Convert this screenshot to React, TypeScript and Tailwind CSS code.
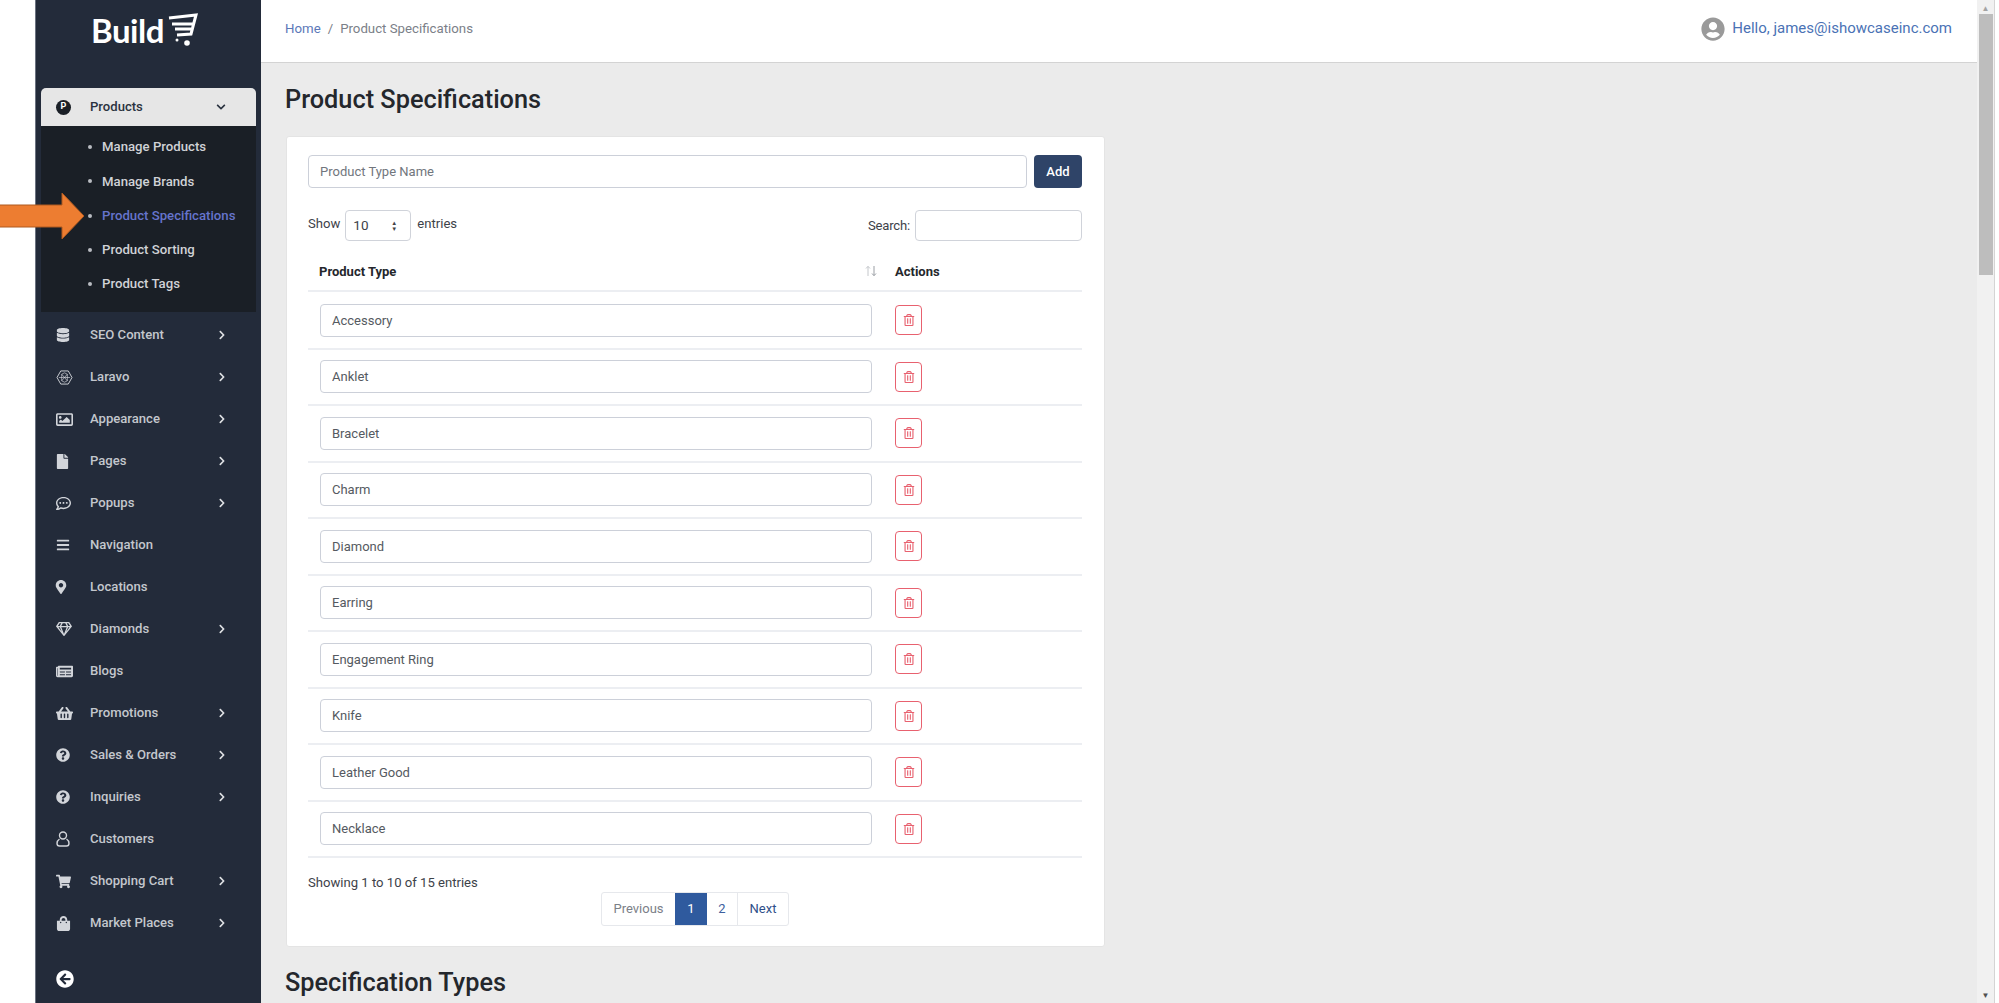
import {
  FaArrowCircleLeft,
  FaBars,
  FaChevronDown,
  FaChevronRight,
  FaDatabase,
  FaFile,
  FaMapMarkerAlt,
  FaNewspaper,
  FaQuestionCircle,
  FaRegCommentDots,
  FaRegGem,
  FaRegImage,
  FaRegTrashAlt,
  FaShoppingBag,
  FaShoppingBasket,
  FaShoppingCart,
  FaUserCircle,
} from "react-icons/fa";
import type { ReactNode } from "react";

const LaravoIcon = () => (
  <svg viewBox="0 0 18 16" className="h-[15px] w-[17px]" fill="none" stroke="currentColor" strokeWidth="1">
    <path d="M5 1h8l4 7-4 7H5L1 8z" />
    <path d="M6 4.5l3-1.5 3 1.5v7l-3 1.5-3-1.5zM3 8h12M6 4.5l6 7M12 4.5l-6 7" strokeWidth="0.7" />
  </svg>
);

const CustomerIcon = () => (
  <svg viewBox="0 0 14 16" className="h-[16px] w-[14px]" fill="none" stroke="currentColor" strokeWidth="1.4">
    <circle cx="7" cy="4.5" r="3.5" />
    <path d="M3.5 8C2 9 1 10.5 1 12.2 1 14 2 15 3.5 15h7c1.500 0 2.500-1 2.500-2.800C13 10.500 12 9 10.500 8" />
  </svg>
);

const SortIcon = () => (
  <svg viewBox="0 0 12 12" className="h-[12px] w-[12px]" fill="none" strokeWidth="1">
    <path d="M3 11V1.500M1 3.500l2-2.200 2 2.200" stroke="#c4c7cb" />
    <path d="M9 1v9.500M7 8.500l2 2.200 2-2.200" stroke="#9a9ea4" />
  </svg>
);

const menu: { label: string; icon: ReactNode; more?: boolean }[] = [
  { label: "SEO Content", icon: <FaDatabase size={14} />, more: true },
  { label: "Laravo", icon: <LaravoIcon />, more: true },
  { label: "Appearance", icon: <FaRegImage size={17} />, more: true },
  { label: "Pages", icon: <FaFile size={15} className="-ml-[1px]" />, more: true },
  { label: "Popups", icon: <FaRegCommentDots size={15} />, more: true },
  { label: "Navigation", icon: <FaBars size={14} /> },
  { label: "Locations", icon: <FaMapMarkerAlt size={14} className="-ml-[2px]" /> },
  { label: "Diamonds", icon: <FaRegGem size={16} />, more: true },
  { label: "Blogs", icon: <FaNewspaper size={17} /> },
  { label: "Promotions", icon: <FaShoppingBasket size={17} />, more: true },
  { label: "Sales & Orders", icon: <FaQuestionCircle size={14} />, more: true },
  { label: "Inquiries", icon: <FaQuestionCircle size={14} />, more: true },
  { label: "Customers", icon: <CustomerIcon /> },
  { label: "Shopping Cart", icon: <FaShoppingCart size={15} />, more: true },
  { label: "Market Places", icon: <FaShoppingBag size={15} />, more: true },
];

const subMenu = ["Manage Products", "Manage Brands", "Product Specifications", "Product Sorting", "Product Tags"];

const productTypes = [
  "Accessory",
  "Anklet",
  "Bracelet",
  "Charm",
  "Diamond",
  "Earring",
  "Engagement Ring",
  "Knife",
  "Leather Good",
  "Necklace",
];

function Sidebar() {
  return (
    <aside className="flex w-[226px] shrink-0 flex-col border-l border-[#6b7280] bg-[#232b3a]">
      <div className="flex h-[88px] items-start pl-[55px] pt-[8px] text-white">
        <span className="font-['Lato',sans-serif] text-[33px] leading-[44px] font-bold tracking-[-0.5px]">Build</span>
        <svg viewBox="0 0 30 34" className="mt-[5px] ml-[4px] h-[34px] w-[30px]" fill="none" stroke="currentColor" strokeWidth="3">
          <path d="M1 5l27-3-5 19-14 1M4 11h21M7 16h16" />
          <circle cx="9" cy="27" r="1.500" fill="currentColor" stroke="none" />
          <circle cx="19" cy="30" r="2.800" fill="currentColor" stroke="none" />
        </svg>
      </div>

      <div className="mx-[5px] overflow-hidden rounded-t-[5px]">
        <div className="flex h-[38px] items-center bg-[#e6e6e6] pl-[15px] pr-[30px] text-[#2b3340]">
          <span className="flex h-[15px] w-[15px] items-center justify-center rounded-full bg-[#1a1f26] text-[9px] font-bold text-white">P</span>
          <span className="ml-[19px] flex-1 text-[13.100px] font-medium">Products</span>
          <FaChevronDown size={10} />
        </div>
        <ul className="flex h-[186px] flex-col bg-[#1a1f26] pt-[4px]">
          {subMenu.map((item) => (
            <li key={item} className="flex h-[34.300px] items-center pl-[47px]">
              <span className="h-[4px] w-[4px] rounded-full bg-[#b9bcc2]" />
              <span
                className={
                  item === "Product Specifications"
                    ? "ml-[10px] text-[13.200px] font-medium text-[#6674cc]"
                    : "ml-[10px] text-[13.200px] font-medium text-[#d0d2d6]"
                }
              >
                {item}
              </span>
            </li>
          ))}
        </ul>
      </div>

      <ul className="mt-[2px]">
        {menu.map((item) => (
          <li key={item.label} className="flex h-[42px] items-center pl-[20px] pr-[34px] text-[#c3c7cd]">
            <span className="flex w-[18px] items-center justify-start text-[#d2d5da]">{item.icon}</span>
            <span className="ml-[16px] flex-1 text-[13.100px] font-medium">{item.label}</span>
            {item.more && <FaChevronRight size={10} className="text-[#dfe1e4]" />}
          </li>
        ))}
      </ul>

      <div className="mt-[26px] pl-[20px] text-white">
        <FaArrowCircleLeft size={18} />
      </div>
    </aside>
  );
}

function TopBar() {
  return (
    <header className="flex h-[63px] shrink-0 items-center justify-between border-b border-[#d3d3d3] bg-white pb-[5px] pl-[24px] pr-[25px]">
      <div className="flex items-center text-[13.250px] text-[#7b8088]">
        <span className="text-[#5b78b8]">Home</span>
        <span className="mx-[7px]">/</span>
        <span>Product Specifications</span>
      </div>
      <div className="flex items-center text-[15px] text-[#4a72b5]">
        <FaUserCircle size={24} className="text-[#9a9a9a]" />
        <span className="ml-[7px]">Hello, james@ishowcaseinc.com</span>
      </div>
    </header>
  );
}

function ProductCard() {
  return (
    <section className="ml-[1px] w-[819px] rounded-[3px] border border-[#e4e4e4] bg-white pl-[21px] pr-[22px] pt-[18px] text-[13.100px] text-[#3d4249]">
      <div className="flex gap-[7px]">
        <input
          placeholder="Product Type Name"
          className="h-[33px] flex-1 rounded-[4px] border border-[#ccd0d9] px-[11px] text-[13px] outline-none placeholder:text-[#71767d]"
        />
        <button className="h-[33px] w-[48px] rounded-[4px] bg-[#2f4468] text-[13px] font-medium text-white">Add</button>
      </div>

      <div className="mt-[22px] flex h-[31px] items-center justify-between">
        <div className="flex items-center">
          <span className="-mt-[3px]">Show</span>
          <span className="ml-[5px] flex h-[31px] w-[66px] items-center justify-between rounded-[4px] border border-[#d0d3da] pl-[7px] pr-[13px] text-[13.500px]">
            10
            <span className="flex flex-col text-[6px] leading-[6px] text-[#444]">
              <span>▲</span>
              <span>▼</span>
            </span>
          </span>
          <span className="-mt-[3px] ml-[6px]">entries</span>
        </div>
        <div className="flex items-center">
          <span className="tracking-[-0.2px]">Search:</span>
          <input className="ml-[5px] h-[31px] w-[167px] rounded-[4px] border border-[#d0d3da] outline-none" />
        </div>
      </div>

      <div className="flex h-[51px] items-end border-b-2 border-[#eceef2] pb-[9px] font-bold text-[#24272c]">
        <div className="flex w-[575px] items-center justify-between pl-[11px] pr-[6px]">
          <span className="text-[13px]">Product Type</span>
          <SortIcon />
        </div>
        <span className="pl-[12px] text-[13px]">Actions</span>
      </div>

      <div className="pt-[1px]">
        {productTypes.map((type) => (
          <div key={type} className="flex h-[56.500px] items-center border-b-2 border-[#eceef2]">
            <div className="w-[575px] pl-[12px] pr-[11px]">
              <input
                readOnly
                value={type}
                className="h-[33px] w-full rounded-[4px] border border-[#ccd0d9] px-[11px] text-[13px] text-[#555a61] outline-none"
              />
            </div>
            <button className="ml-[12px] flex h-[30px] w-[27px] items-center justify-center rounded-[4px] border border-[#e8616f] text-[#e8616f]">
              <FaRegTrashAlt size={12} />
            </button>
          </div>
        ))}
      </div>

      <p className="mt-[16px] leading-[18px]">Showing 1 to 10 of 15 entries</p>
      <div className="flex justify-center pb-[20px]">
        <div className="flex h-[34px] overflow-hidden rounded-[3px] border border-[#e6e8ec] text-[13px]">
          <span className="flex w-[73px] items-center justify-center text-[#7b8088]">Previous</span>
          <span className="flex w-[32px] items-center justify-center bg-[#2f5a9e] text-white">1</span>
          <span className="flex w-[31px] items-center justify-center border-r border-[#e6e8ec] text-[#3d5f9e]">2</span>
          <span className="flex w-[50px] items-center justify-center text-[#2f4f8a]">Next</span>
        </div>
      </div>
    </section>
  );
}

function FakeScrollbar() {
  return (
    <div className="flex w-[22px] shrink-0 bg-white">
      <div className="flex w-[17px] flex-col items-center justify-between bg-[#f1f1f1] pb-[3px] pt-[4px]">
        <div className="flex w-full flex-1 flex-col items-center">
          <span className="text-[8px] leading-[9px] text-[#a3a3a3]">▲</span>
          <div className="ml-[1px] mt-[1px] h-[261px] w-[14px] bg-[#bdbdbd]" />
        </div>
        <span className="text-[8px] leading-[9px] text-[#505050]">▼</span>
      </div>
      <div className="w-[1px] bg-[#d4d4d4]" />
    </div>
  );
}

export default function App() {
  return (
    <div className="relative flex h-[1003px] w-full overflow-hidden bg-white font-['Roboto',sans-serif]">
      <div className="w-[35px] shrink-0 bg-white" />
      <Sidebar />
      <main className="flex min-w-0 flex-1 flex-col overflow-hidden bg-[#ebebeb]">
        <TopBar />
        <div className="pl-[24px]">
          <h1 className="mt-[22px] mb-[21px] text-[25.300px] leading-[30px] font-medium text-[#24272c]">Product Specifications</h1>
          <ProductCard />
          <h2 className="mt-[21px] text-[25.300px] leading-[30px] font-medium text-[#24272c]">Specification Types</h2>
        </div>
      </main>
      <FakeScrollbar />

      {/* callout arrow that was pasted over the screenshot */}
      <svg viewBox="0 0 85 48" className="absolute left-0 top-[192px] h-[48px] w-[85px]">
        <path d="M-2 13H62V1L84 24 62 47V35H-2z" fill="#ed7d31" stroke="#ae5a21" strokeWidth="1" />
      </svg>
    </div>
  );
}
